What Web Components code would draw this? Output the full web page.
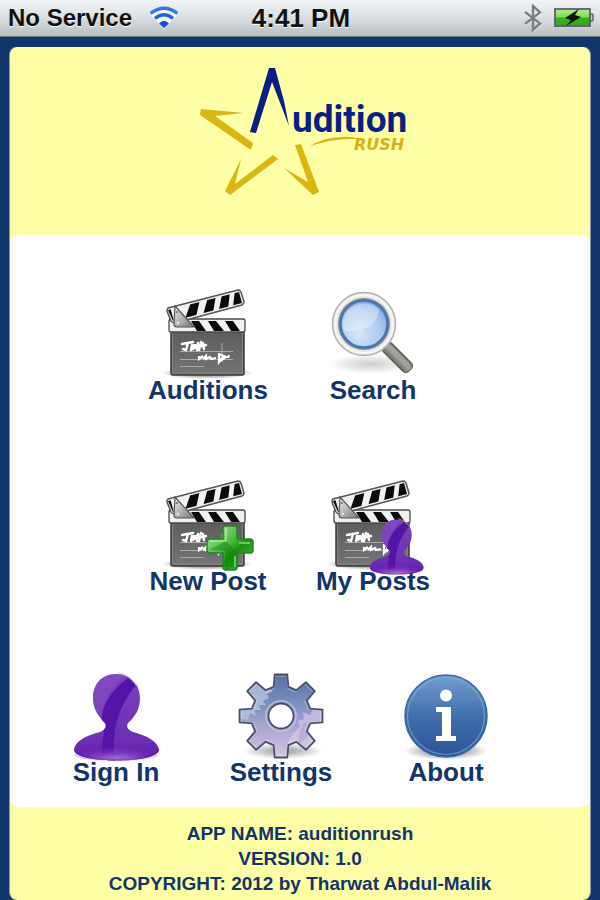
<!DOCTYPE html>
<html lang="en">
<head>
<meta charset="utf-8">
<meta name="viewport" content="width=device-width, initial-scale=1">
<title>Audition Rush</title>
<style>
  body {
    margin: 0;
    background: #12356b;
    font-family: "Liberation Sans", Arial, sans-serif;
    font-weight: bold;
  }
</style>
</head>
<body>
<audition-app>
  <status-bar slot="status" carrier="No Service" time="4:41 PM"></status-bar>
  <app-logo slot="header"></app-logo>
  <menu-row class="pair">
    <menu-tile icon="clapper">Auditions</menu-tile>
    <menu-tile icon="search">Search</menu-tile>
  </menu-row>
  <menu-row class="pair">
    <menu-tile icon="clapper-plus">New Post</menu-tile>
    <menu-tile icon="clapper-person">My Posts</menu-tile>
  </menu-row>
  <menu-row>
    <menu-tile icon="person">Sign In</menu-tile>
    <menu-tile icon="gear">Settings</menu-tile>
    <menu-tile icon="info">About</menu-tile>
  </menu-row>
  <app-about slot="footer">
    <div>APP NAME: auditionrush</div>
    <div>VERSION: 1.0</div>
    <div>COPYRIGHT: 2012 by Tharwat Abdul-Malik</div>
  </app-about>
</audition-app>

<script>
// Outline of a cog with square teeth, centred on cx, cy.
function gearPath(cx, cy, outer, inner, teeth) {
  const points = [];
  const step = (Math.PI * 2) / teeth;
  for (let i = 0; i < teeth; i++) {
    const angle = i * step - Math.PI / 2;
    const corners = [
      [inner, -0.25],
      [outer, -0.15],
      [outer, 0.15],
      [inner, 0.25]
    ];
    for (const [r, offset] of corners) {
      const x = cx + r * Math.cos(angle + offset);
      const y = cy + r * Math.sin(angle + offset);
      points.push(`${x.toFixed(1)} ${y.toFixed(1)}`);
    }
  }
  return `M${points.join('L')}Z`;
}

const clapper = `
  <defs>
    <linearGradient id="board" x1="0" y1="0" x2="0" y2="1">
      <stop offset="0" stop-color="#5c5c5c"/><stop offset="1" stop-color="#747474"/>
    </linearGradient>
    <linearGradient id="hinge" x1="0" y1="0" x2="1" y2="1">
      <stop offset="0" stop-color="#eee"/><stop offset="1" stop-color="#777"/>
    </linearGradient>
    <radialGradient id="shade">
      <stop offset=".5" stop-color="#000" stop-opacity=".35"/><stop offset="1" stop-color="#000" stop-opacity="0"/>
    </radialGradient>
    <clipPath id="top"><path d="M8 25L79 7L82 18L13 36Z"/></clipPath>
    <clipPath id="bar"><rect x="10" y="36" width="75" height="10"/></clipPath>
  </defs>
  <ellipse cx="47" cy="88" rx="46" ry="6" fill="url(#shade)"/>
  <rect x="11" y="44" width="73" height="46" rx="2" fill="url(#board)" stroke="#3a3a3a" stroke-width="1.5"/>
  <path d="M12.5 48V88H82.500V48" fill="none" stroke="#8b8b8b" stroke-width=".8"/>
  <rect x="9" y="34" width="76" height="13" rx="2" fill="#f1f1f1" stroke="#4a4a4a" stroke-width="1.3"/>
  <path clip-path="url(#bar)" fill="#0b0b0b" d="M31 36H39L46 46H37ZM48 36H56L64 46H54ZM65 36H73L80 46H71Z"/>
  <path d="M8 23L78 5Q80 5 81 7L84 17Q84 19 82 20L15 38Q12 38 11 36L7 26Q7 24 8 23Z" fill="#f1f1f1" stroke="#555" stroke-width="1.5"/>
  <path clip-path="url(#top)" fill="#0b0b0b" d="M10 22L15 40L9 37L6 26ZM31 17L40 14L36 32L25 34ZM48 12L56 10L53 28L43 30ZM62 9L70 7L68 24L59 25ZM75 5L84 4L83 19L73 22Z"/>
  <path d="M15 21L34 42H17Q14 42 14 39Z" fill="url(#hinge)" stroke="#555" stroke-width="1.2"/>
  <circle cx="17" cy="27" r="1" fill="#666"/><circle cx="18" cy="38" r="1.2" fill="#eee"/>
  <path d="M20 66.500H73M20 74.500H73M20 81.500H44M62 58V77" stroke="#aaa" stroke-width="1" fill="none"/>
  <path d="M22 59L33 57M28 58L26 65L23 64M32 60L31 65M32 62Q36 58 36 62L33 64M38 58L37 65M41 57L39 65M38 62L46 60M43 58L44 64" stroke="#fff" stroke-width="2.4" fill="none" stroke-linecap="round"/>
  <path d="M39 71V74L43 71M43 74L46 71V74L50 72L51 74L56 73M59 68V77L63 72M59 69L66 72L60 76M69 70L68 73" stroke="#fff" stroke-width="2.2" fill="none"/>`;

const person = `
  <defs>
    <linearGradient id="skin" x1="0" y1="0" x2="0" y2="1">
      <stop offset="0" stop-color="#7c40bd"/><stop offset=".75" stop-color="#6d2fb5"/><stop offset="1" stop-color="#5f19ad"/>
    </linearGradient>
    <radialGradient id="glow" cx=".5" cy="1" r=".6">
      <stop offset="0" stop-color="#d6b2f0"/><stop offset=".5" stop-color="#a263d4" stop-opacity=".7"/><stop offset="1" stop-color="#6d2fb5" stop-opacity="0"/>
    </radialGradient>
    <clipPath id="bust"><path d="M48 7C33 7 25 18 25 31C25 42 31 50 37 56Q40 62 32 65C17 69 7 74 6 83C7 97 90 97 91 83C90 74 79 69 65 65Q57 62 60 56C67 50 72 42 72 31C72 18 63 7 48 7Z"/></clipPath>
  </defs>
  <ellipse cx="48" cy="88" rx="42" ry="6" fill="#e3cdf2"/>
  <g clip-path="url(#bust)">
    <rect x="4" y="5" width="90" height="90" fill="url(#skin)"/>
    <path d="M60 11Q35 29 33 54L36 66L32 94H47Q41 50 68 18Z" fill="#5414a5"/>
    <path d="M41 7H58Q35 26 33 54L24 48V7Z" fill="#8b50c6" opacity=".5"/>
    <ellipse cx="48" cy="82" rx="42" ry="16" fill="url(#glow)"/>
    <path d="M6 79Q7 92 48 92T91 79V84Q88 95 48 95T6 84Z" fill="#5e13b1" opacity=".4"/>
  </g>
  <path d="M50 6Q61 7 68 18" fill="none" stroke="#d9bdec" stroke-width="1"/>`;

// Drawings for menu-tile, all on a 96x92 canvas.
const icons = {
  clapper,

  'clapper-plus': `${clapper}
    <defs>
      <linearGradient id="plus" x1="0" y1="0" x2="1" y2="1">
        <stop offset="0" stop-color="#b5edab"/><stop offset=".45" stop-color="#45b83b"/><stop offset=".6" stop-color="#179310"/><stop offset="1" stop-color="#4dbd45"/>
      </linearGradient>
    </defs>
    <g transform="translate(0 -4)">
      <path d="M65 54H75Q77 54 77 56V67H90Q93 67 93 70V78Q93 81 90 81H77V95Q77 98 74 98H66Q63 98 63 95V81H50Q47 81 47 78V70Q47 67 50 67H63V56Q63 54 65 54Z" fill="url(#plus)" stroke="#21861c" stroke-width="1.5"/>
      <path d="M66 56V69H50" fill="none" stroke="#c9f4c2" stroke-width="1.5" opacity=".7"/>
      <path d="M49 78L66 69L77 81V95H65V79Z" fill="#08780a" opacity=".4"/>
      <path d="M79 71H90M75 84V95" stroke="#8add80" stroke-width="2" opacity=".7"/>
    </g>`,

  'clapper-person': `${clapper}<g transform="translate(41 39) scale(.635)">${person}</g>`,

  search: `
    <defs>
      <radialGradient id="lens" cx=".4" cy=".7" r=".75">
        <stop offset="0" stop-color="#d5e6fa"/><stop offset=".65" stop-color="#a9c8ed"/><stop offset="1" stop-color="#7ba6dc"/>
      </radialGradient>
      <linearGradient id="handle" x1="0" y1="0" x2="0" y2="1">
        <stop offset="0" stop-color="#6d716a"/><stop offset=".45" stop-color="#a6a9a3"/><stop offset="1" stop-color="#666a63"/>
      </linearGradient>
      <radialGradient id="shade">
        <stop offset="0" stop-color="#000" stop-opacity=".2"/><stop offset="1" stop-color="#000" stop-opacity="0"/>
      </radialGradient>
    </defs>
    <ellipse cx="46" cy="79" rx="42" ry="10" fill="url(#shade)"/>
    <g transform="rotate(45 39 39)">
      <rect x="68" y="33" width="36" height="12" rx="4" fill="url(#handle)" stroke="#555953" stroke-width="1"/>
      <path d="M72 36H100" stroke="#b9bcb6" stroke-width="1"/>
    </g>
    <circle cx="39" cy="39" r="31.500" fill="#e6e7e2" stroke="#b0b2ad" stroke-width="1.5"/>
    <circle cx="39" cy="39" r="29" fill="none" stroke="#f7f7f4" stroke-width="2"/>
    <circle cx="39" cy="39" r="26" fill="#898c87"/>
    <circle cx="39" cy="39" r="23.500" fill="url(#lens)" stroke="#4276bb" stroke-width="2.5"/>
    <path d="M18 43C17 26 29 17 43 19Q50 20 54 25C53 39 39 48 19 46Z" fill="#fff" opacity=".35"/>`,

  person,

  gear: `
    <defs>
      <linearGradient id="metal" x1="0" y1="0" x2="0" y2="1">
        <stop offset="0" stop-color="#4f6ea4"/><stop offset=".4" stop-color="#8193c1"/><stop offset=".75" stop-color="#bdb0d8"/><stop offset="1" stop-color="#d5c8e6"/>
      </linearGradient>
      <radialGradient id="shade">
        <stop offset=".3" stop-color="#000" stop-opacity=".3"/><stop offset="1" stop-color="#000" stop-opacity="0"/>
      </radialGradient>
      <clipPath id="cog"><path d="${gearPath(48, 49, 42, 30, 8)}"/></clipPath>
    </defs>
    <ellipse cx="50" cy="84" rx="40" ry="8" fill="url(#shade)"/>
    <g clip-path="url(#cog)">
      <rect x="4" y="5" width="88" height="88" fill="url(#metal)"/>
      <path d="M4 5H39L35 21L40 24L34 27L36 31L30 34L33 38L26 38L28 43L21 43L23 49L17 46L15 53L4 51Z" fill="#b1c1d9" opacity=".85"/>
      <path d="M92 42H80L77 48L70 45L71 52L65 54L67 60L60 66L54 77L65 88H92Z" fill="#d8cae8" opacity=".65"/>
      <path d="M73 54Q65 61 66 77L81 65Z" fill="#9a94bd" opacity=".4"/>
    </g>
    <path d="${gearPath(48, 49, 40, 28, 8)}" fill="none" stroke="#fff" stroke-width="1" opacity=".35"/>
    <path d="${gearPath(48, 49, 42, 30, 8)}" fill="none" stroke="#4b506d" stroke-width="1.8" stroke-linejoin="round"/>
    <circle cx="48" cy="49" r="15" fill="none" stroke="#c1c7df" stroke-width="2" opacity=".7"/>
    <circle cx="48" cy="49" r="12.500" fill="#fff" stroke="#4b506d" stroke-width="1.8"/>`,

  info: `
    <defs>
      <linearGradient id="ball" x1="0" y1="0" x2="0" y2="1">
        <stop offset="0" stop-color="#719fd0"/><stop offset=".5" stop-color="#416fab"/><stop offset="1" stop-color="#2a559a"/>
      </linearGradient>
      <radialGradient id="shade">
        <stop offset=".4" stop-color="#000" stop-opacity=".35"/><stop offset="1" stop-color="#000" stop-opacity="0"/>
      </radialGradient>
    </defs>
    <ellipse cx="48" cy="84" rx="42" ry="9" fill="url(#shade)"/>
    <circle cx="48" cy="49" r="41" fill="url(#ball)" stroke="#3868a8" stroke-width="1.5"/>
    <circle cx="48" cy="49" r="38.500" fill="none" stroke="#8db2dc" stroke-width="1.2" opacity=".6"/>
    <circle cx="48" cy="28.500" r="6" fill="#fff"/>
    <path d="M38 40H53V69H58V74H38V69H44V45H38Z" fill="#fff"/>`
};

class AuditionApp extends HTMLElement {
  constructor() {
    super();
    this.attachShadow({mode: 'open'});
    this.shadowRoot.innerHTML = `
      <style>
        :host {
          display: flex;
          flex-direction: column;
          min-height: 100vh;
          color: #12356b;
        }
        .card {
          flex: 1;
          display: flex;
          flex-direction: column;
          margin: 10px 9px 0;
          border: solid #8295ac;
          border-width: 0 1px;
          border-radius: 8px;
          background: #ffffa6;
        }
        header {
          padding: 8px 0 30px;
        }
        main {
          flex: 1;
          display: flex;
          flex-direction: column;
          gap: 73px;
          padding: 50px 0 22px;
          border-radius: 8px;
          background: #fff;
        }
      </style>
      <slot name="status"></slot>
      <div class="card">
        <header><slot name="header"></slot></header>
        <main><slot></slot></main>
        <slot name="footer"></slot>
      </div>
    `;
  }
}
customElements.define('audition-app', AuditionApp);

class StatusBar extends HTMLElement {
  constructor() {
    super();
    this.attachShadow({mode: 'open'});
    this.render();
  }

  static get observedAttributes() {
    return ['carrier', 'time'];
  }

  attributeChangedCallback() {
    this.render();
  }

  render() {
    const carrier = this.getAttribute('carrier') || '';
    const time = this.getAttribute('time') || '';
    this.shadowRoot.innerHTML = `
      <style>
        :host {
          display: grid;
          grid-template-columns: 1fr auto 1fr;
          align-items: center;
          height: 36px;
          padding: 0 6px 0 8px;
          border-bottom: 1px solid #6d7883;
          background: linear-gradient(#f0f4f6, #dce1e4 45%, #b7bfc3);
          color: #111;
          font-size: 24px;
          line-height: 36px;
          text-shadow: 0 1px 0 #fff;
        }
        svg { display: block; }
        .left, .right {
          display: flex;
          align-items: center;
          gap: 16px;
        }
        .right {
          gap: 12px;
          justify-content: flex-end;
        }
        .time { font-size: 26px; }
      </style>
      <div class="left">
        <span>${carrier}</span>
        <svg width="32" height="24" viewBox="0 0 32 24" fill="none">
          <path d="M1 7Q16 -5 31 7L16 23Z" fill="#fff" opacity=".85"/>
          <path d="M2.500 7.500Q16 -3 29.500 7.500" stroke="#2c7be0" stroke-width="3.200"/>
          <path d="M7 12.500Q16 5 25 12.500" stroke="#1d67da" stroke-width="3.200"/>
          <path d="M11 17.500Q16 12 21 17.500L16 22Z" fill="#1452c9"/>
        </svg>
      </div>
      <div class="time">${time}</div>
      <div class="right">
        <svg width="18" height="28" viewBox="0 0 18 28" fill="none">
          <path d="M1 8L16 19.500L9 26V2L16 8.500L1 20" stroke="#fff" stroke-width="2" transform="translate(0 1)"/>
          <path d="M1 8L16 19.500L9 26V2L16 8.500L1 20" stroke="#7d7d7f" stroke-width="2.4"/>
        </svg>
        <svg width="40" height="22" viewBox="0 0 40 22">
          <defs>
            <linearGradient id="cell" x1="0" y1="0" x2="0" y2="1">
              <stop offset="0" stop-color="#b4ec92"/><stop offset=".45" stop-color="#7fe04a"/><stop offset=".55" stop-color="#35b31b"/><stop offset="1" stop-color="#37a51c"/>
            </linearGradient>
          </defs>
          <path d="M36 7H38Q39 7 39 8V13Q39 14 38 14H36" fill="#c8cbd8" stroke="#5b5c7b" stroke-width="1.5"/>
          <rect x="1" y="2" width="35" height="17" fill="url(#cell)" stroke="#5b5c7b" stroke-width="1.8"/>
          <path d="M25 2L11 11L17 13L12 19L27 10L21 8Z" fill="#111"/>
        </svg>
      </div>
    `;
  }
}
customElements.define('status-bar', StatusBar);

class AppLogo extends HTMLElement {
  constructor() {
    super();
    this.attachShadow({mode: 'open'});
    this.shadowRoot.innerHTML = `
      <style>
        :host {
          display: flex;
          justify-content: center;
        }
        svg { overflow: visible; }
        .name {
          font: bold 37px Roboto, sans-serif;
          fill: #081f87;
        }
        .rush {
          font: italic bold 16px "DejaVu Sans", sans-serif;
          fill: #d6b116;
        }
      </style>
      <svg width="230" height="150" viewBox="-5 0 230 150">
        <path d="M60 77L79 13H85L94 46L99 71L82 27L66 78Z" fill="#081f87"/>
        <g fill="#d9b611">
          <path d="M11 54L54 58L25 61L63 88L61 95L10 60Z"/>
          <path d="M51 104L45 129L83 100L88 104L40 140L35 136Z"/>
          <path d="M105 90L111 89L129 137L123 140L94 113L118 127Z"/>
          <path d="M119 92Q136 80 162 82L170 84Q139 83 119 92Z"/>
        </g>
        <text class="name" x="102" y="77">udition</text>
        <text class="rush" x="164" y="95">RUSH</text>
      </svg>
    `;
  }
}
customElements.define('app-logo', AppLogo);

class MenuRow extends HTMLElement {
  constructor() {
    super();
    this.attachShadow({mode: 'open'});
    this.shadowRoot.innerHTML = `
      <style>
        :host {
          display: flex;
          justify-content: center;
          padding-right: 38px;
        }
        :host(.pair) { padding-right: 19px; }
      </style>
      <slot></slot>
    `;
  }
}
customElements.define('menu-row', MenuRow);

class MenuTile extends HTMLElement {
  constructor() {
    super();
    this.attachShadow({mode: 'open'});
    this.render();
  }

  static get observedAttributes() {
    return ['icon'];
  }

  attributeChangedCallback() {
    this.render();
  }

  render() {
    const icon = icons[this.getAttribute('icon')] || '';
    this.shadowRoot.innerHTML = `
      <style>
        :host {
          display: block;
          flex: 0 1 165px;
        }
        button {
          display: flex;
          flex-direction: column;
          align-items: center;
          width: 100%;
          padding: 0;
          border: 0;
          background: none;
          color: inherit;
          font: inherit;
          font-size: 26px;
          line-height: 26px;
          white-space: nowrap;
          cursor: pointer;
        }
        svg {
          display: block;
          overflow: visible;
        }
      </style>
      <button type="button">
        <svg width="96" height="92" viewBox="0 0 96 92" aria-hidden="true">${icon}</svg>
        <span><slot></slot></span>
      </button>
    `;
  }
}
customElements.define('menu-tile', MenuTile);

class AppAbout extends HTMLElement {
  constructor() {
    super();
    this.attachShadow({mode: 'open'});
    this.shadowRoot.innerHTML = `
      <style>
        :host {
          display: block;
          padding: 14px 0 4px;
          font-size: 19px;
          line-height: 25px;
          text-align: center;
        }
      </style>
      <slot></slot>
    `;
  }
}
customElements.define('app-about', AppAbout);
</script>
</body>
</html>
